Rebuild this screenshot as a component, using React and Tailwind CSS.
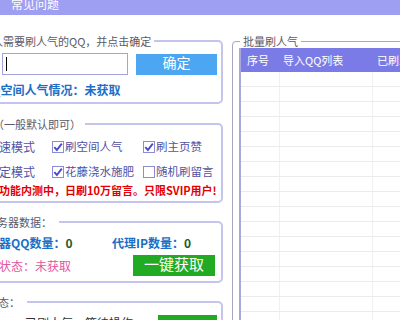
import React from "react";

const Check = ({ checked, label }) => (
  <span className="flex items-center gap-[1px]">
    <span className="w-[12px] h-[12px] border border-[#8c8cd4] bg-white flex items-center justify-center">
      {checked && (
        <svg width="10" height="10" viewBox="0 0 10 10">
          <path d="M1.3 5.2 L3.9 8 L8.8 1.6" stroke="#4b4bc6" strokeWidth="1.9" fill="none" />
        </svg>
      )}
    </span>
    <span className="text-[11.5px] text-[#5252a2]">{label}</span>
  </span>
);

const Legend = ({ children, className = "" }) => (
  <legend className={`text-[11px] leading-[14px] text-[#5a5a6a] ${className}`}>{children}</legend>
);

const Box = ({ children, className = "" }) => (
  <fieldset className={`border-2 border-[#c4c4ec] rounded-[5px] ${className}`}>{children}</fieldset>
);

export default function App() {
  const rows = Array.from({ length: 17 });

  return (
    <div className="w-[400px] h-[320px] overflow-hidden bg-white font-['Noto_Sans_CJK_SC','Liberation_Sans',sans-serif]">
      <div className="h-[15px] overflow-hidden bg-[#9e9ef2]">
        <span className="block -mt-[3px] pl-[11px] text-[12px] leading-[14px] text-white">常见问题</span>
      </div>

      <div className="flex pt-[19px]">
        {/* left column */}
        <div className="w-[267px] -ml-[44px] shrink-0 flex flex-col">
          <Box className="pb-[4px]">
            <Legend className="ml-[9px] px-[3px]">请输入需要刷人气的QQ，并点击确定</Legend>
            <div className="flex items-start mt-[5px]">
              <div className="ml-[44px] w-[126px] h-[22px] border border-[#a4a4dc] bg-white flex items-center pl-[3px]">
                <span className="w-px h-[14px] bg-black" />
              </div>
              <div className="ml-[8px] mt-[1px] w-[81px] h-[21px] bg-[#4da6f2] flex justify-center text-white text-[14px] leading-[17px]">
                确定
              </div>
            </div>
            <p className="ml-[24px] mt-[7px] text-[12px] leading-[16px] font-bold text-[#1a6fc6]">QQ空间人气情况：未获取</p>
          </Box>

          <Box className="mt-[13px] pb-[4px]">
            <Legend className="ml-[32px] pl-[3px] pr-[4px]">（一般默认即可）</Legend>
            <div className="flex items-center h-[16px] mt-[8px] ml-[29px]">
              <span className="w-[65px] text-[12px] text-[#5252a2]">极速模式</span>
              <span className="w-[91px]"><Check checked label="刷空间人气" /></span>
              <Check checked label="刷主页赞" />
            </div>
            <div className="flex items-center h-[16px] mt-[9px] ml-[29px]">
              <span className="w-[65px] text-[12px] text-[#5252a2]">稳定模式</span>
              <span className="w-[91px]"><Check checked label="花藤浇水施肥" /></span>
              <Check label="随机刷留言" />
            </div>
            <p className="ml-[30px] mt-[3px] text-[11px] leading-[14px] font-bold text-[#e40000] whitespace-nowrap">
              此功能内测中，日刷10万留言。只限SVIP用户!
            </p>
          </Box>

          <Box className="mt-[12px] pb-[5px]">
            <Legend className="ml-[25px] pl-[3px] pr-[7px] text-[11.5px]">服务器数据：</Legend>
            <div className="flex items-center h-[16px] mt-[6px] ml-[17px] text-[12px] font-bold text-[#1a6fc6]">
              <span className="w-[137px]">服务器QQ数量：<span className="text-[#1d5a2a]">0</span></span>
              <span>代理IP数量：<span className="text-[#1d5a2a]">0</span></span>
            </div>
            <div className="flex items-center mt-[4px] ml-[17px]">
              <span className="text-[12px] text-[#e2559e]">当前状态：未获取</span>
              <div className="ml-auto mr-[6px] w-[82px] h-[21px] bg-[#22aa22] flex justify-center text-white text-[15px] leading-[17px]">
                一键获取
              </div>
            </div>
          </Box>

          <Box className="mt-[12px] h-[60px]">
            <Legend className="ml-[4px] pl-[3px] pr-[7px] text-[11.5px]">运行状态：</Legend>
            <div className="flex items-start mt-[6px]">
              <span className="ml-[67px] text-[12px] leading-[16px] text-[#333]">已刷人气：等待操作</span>
              <div className="ml-auto mr-[4px] w-[59px] h-[21px] bg-[#22aa22]" />
            </div>
          </Box>
        </div>

        {/* right column */}
        <fieldset className="ml-[9px] w-[200px] h-[320px] shrink-0 border border-[#a6a6c2] rounded-[4px]">
          <Legend className="ml-[7px] px-[3px]">批量刷人气</Legend>
          <div className="ml-[6px] border-l-2 border-[#a8a8de]">
            <div className="flex items-center h-[24px] bg-[#7b7be8] text-white text-[11px]">
              <span className="w-[39px] pl-[6px]">序号</span>
              <span className="w-[93px] pl-[3px]">导入QQ列表</span>
              <span className="pl-[4px] whitespace-nowrap">已刷人气</span>
            </div>
            {rows.map((_, i) => (
              <div key={i} className="flex h-[15px] border-b border-[#ebebeb]">
                <span className="w-[39px] border-r border-[#f0f0f0]" />
                <span className="w-[93px] border-r border-[#f0f0f0]" />
                <span className="flex-1" />
              </div>
            ))}
          </div>
        </fieldset>
      </div>
    </div>
  );
}
